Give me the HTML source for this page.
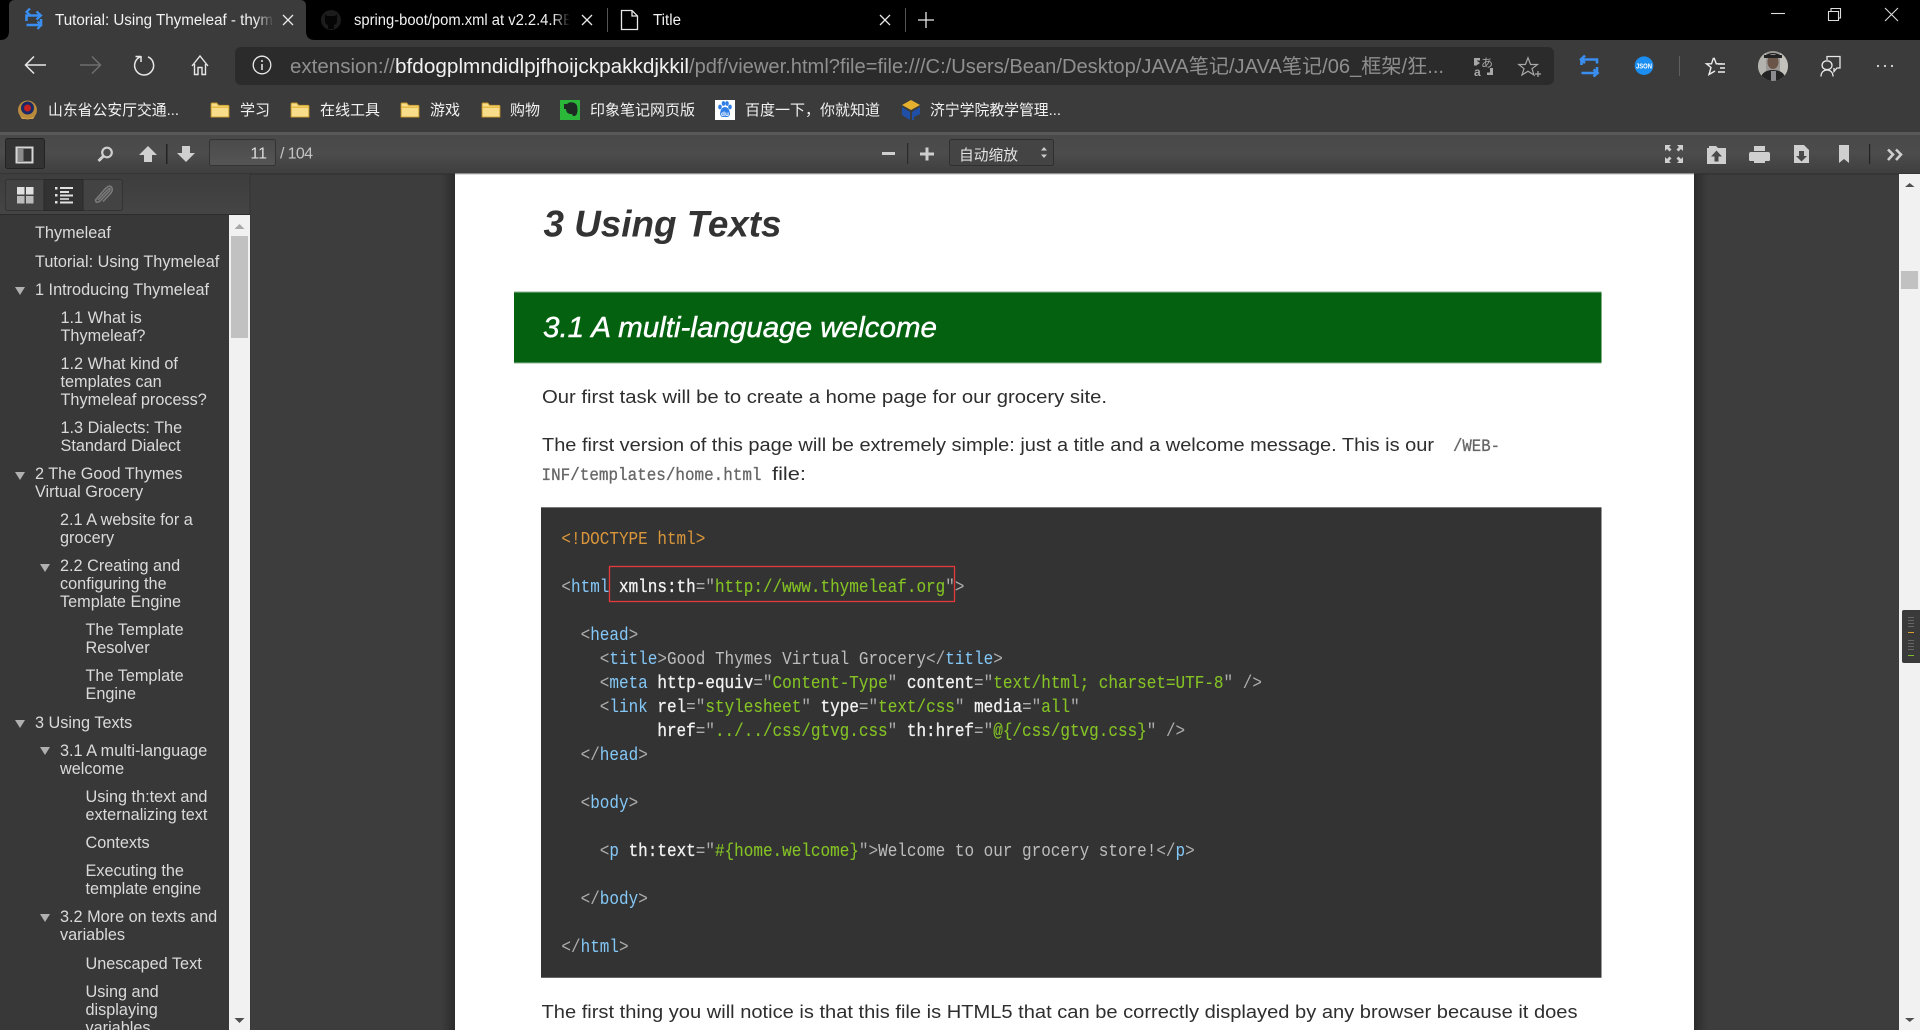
<!DOCTYPE html>
<html>
<head>
<meta charset="utf-8">
<title>Tutorial: Using Thymeleaf</title>
<style>
html,body{margin:0;padding:0;background:#3b3b3b;overflow:hidden}
svg{display:block}
text{font-family:"Liberation Sans","Noto Sans CJK SC",sans-serif}
.cjk{font-family:"Liberation Sans","Noto Sans CJK SC",sans-serif;font-size:15px;fill:#f2f2f2}
.s{font-size:16.25px;fill:#dadada}
.c{font-family:"Liberation Mono",monospace;font-size:18px;white-space:pre;fill:#b5b5b5}
.o{fill:#d9963a}.b{fill:#84c8f8}.w{fill:#f2f2f2;stroke:#f2f2f2;stroke-width:.3}.g{fill:#84c225;stroke:#84c225;stroke-width:.12}.p{fill:#adadad}.t{fill:#bdbdbd}
.ic{fill:none;stroke:#e6e6e6;stroke-width:1.5}
.pd{fill:#cfcfcf}
</style>
</head>
<body>
<svg xmlns="http://www.w3.org/2000/svg" width="1920" height="1030" viewBox="0 0 1920 1030">
<defs>
<linearGradient id="tb" x1="0" y1="0" x2="0" y2="1"><stop offset="0" stop-color="#484848"/><stop offset=".5" stop-color="#4c4c4c"/><stop offset="1" stop-color="#3e3e3e"/></linearGradient>
<linearGradient id="st" x1="0" y1="0" x2="0" y2="1"><stop offset="0" stop-color="#3d3d3d"/><stop offset="1" stop-color="#454545"/></linearGradient>
<linearGradient id="shR" x1="0" y1="0" x2="1" y2="0"><stop offset="0" stop-color="#2c2c2c"/><stop offset="1" stop-color="#3d3d3d"/></linearGradient>
<linearGradient id="shL" x1="1" y1="0" x2="0" y2="0"><stop offset="0" stop-color="#2c2c2c"/><stop offset="1" stop-color="#3d3d3d"/></linearGradient>
<linearGradient id="f1" x1="0" y1="0" x2="1" y2="0"><stop offset="0" stop-color="#3b3b3b" stop-opacity="0"/><stop offset="1" stop-color="#3b3b3b"/></linearGradient>
<linearGradient id="f2" x1="0" y1="0" x2="1" y2="0"><stop offset="0" stop-color="#000" stop-opacity="0"/><stop offset=".8" stop-color="#000"/></linearGradient>
<linearGradient id="inp" x1="0" y1="0" x2="0" y2="1"><stop offset="0" stop-color="#4a4a4a"/><stop offset="1" stop-color="#555"/></linearGradient>
<clipPath id="av"><circle cx="1773" cy="66" r="15"/></clipPath>
<symbol id="fold" viewBox="0 0 20 16"><path d="M.5 15.500V1.500q0-1 1-1h5l2 2.500h10q1 0 1 1v11.500z" fill="#f8dd8a" stroke="#c79a2a"/><path d="M.5 5h19" stroke="#e5b93f" stroke-width="1.500"/></symbol>
</defs>

<!-- Tab strip -->
<rect x="0" y="0" width="1920" height="40" fill="#000"/>
<rect x="0" y="40" width="1920" height="92" fill="#3b3b3b"/>
<path d="M0 40Q9 40 9 31V6Q9 0 15 0H300Q306 0 306 6V31Q306 40 315 40Z" fill="#3b3b3b"/>
<g fill="none" stroke="#3a8eef" stroke-width="2.600">
<path d="M26.500 21V15.500H41"/><path d="M30 8.500L26.500 12 30 15" stroke-width="2.200"/>
<path d="M41 19V25H26.500"/><path d="M37.500 21.500L41 25 37.500 29" stroke-width="2.200"/>
<path d="M36.500 11.500L41 15.500 36.500 19.500" stroke-width="2.200"/>
</g>
<text x="55" y="25" font-size="15.300" fill="#f2f2f2" textLength="218" lengthAdjust="spacingAndGlyphs">Tutorial: Using Thymeleaf - thym</text>
<rect x="255" y="8" width="19" height="24" fill="url(#f1)"/>
<path d="M283 15L293 25M293 15L283 25" stroke="#e8e8e8" stroke-width="1.300"/>
<circle cx="331" cy="20" r="10" fill="#1c1c1c"/><path d="M325 14l2 2h8l2-2v7q0 3-3 4v4h-6v-4q-3-1-3-4z" fill="#050505"/>
<text x="354" y="25" font-size="15.300" fill="#f2f2f2" textLength="219" lengthAdjust="spacingAndGlyphs">spring-boot/pom.xml at v2.2.4.RE</text>
<rect x="553" y="8" width="21" height="24" fill="url(#f2)"/>
<path d="M582 15L592 25M582 25L592 15" stroke="#e8e8e8" stroke-width="1.300"/>
<rect x="607" y="8" width="1" height="24" fill="#555"/>
<path d="M621.500 10.500H632L637.500 16V29.500H621.500ZM632 10.500V16H637.500" fill="none" stroke="#e8e8e8" stroke-width="1.300"/>
<text x="653" y="25" font-size="15.300" fill="#f2f2f2" textLength="28" lengthAdjust="spacingAndGlyphs">Title</text>
<path d="M880 15L890 25M880 25L890 15" stroke="#e8e8e8" stroke-width="1.300"/>
<rect x="905" y="8" width="1" height="24" fill="#555"/>
<path d="M926 12V28M918 20H934" stroke="#e8e8e8" stroke-width="1.300"/>
<!-- window controls -->
<path d="M1771 13.500H1785" stroke="#ddd" stroke-width="1.100"/>
<path d="M1828.500 11.500H1838.500V20.500H1828.500ZM1831 11V8.500H1840.500V18H1838.500" fill="none" stroke="#ddd" stroke-width="1.100"/>
<path d="M1885 8L1898 21M1898 8L1885 21" stroke="#ddd" stroke-width="1.100"/>

<!-- Nav -->
<path d="M46 65H26M34 56.500L25.500 65 34 73.500" fill="none" stroke="#e8e8e8" stroke-width="1.500"/>
<path d="M80 65H100M92 56.500L100.500 65 92 73.500" fill="none" stroke="#6e6e6e" stroke-width="1.500"/>
<path d="M141 56.500A9.500 9.500 0 1 0 148 56.800M141 56V62M141 56.500H135.500" fill="none" stroke="#e8e8e8" stroke-width="1.500"/>
<path d="M192 66L200 56 208 66M194.500 64V74.500H198V67.500H202V74.500H205.500V64" fill="none" stroke="#e8e8e8" stroke-width="1.400"/>
<rect x="235" y="47" width="1319" height="38" rx="6" fill="#2b2b2b"/>
<circle cx="262" cy="65" r="8.800" fill="none" stroke="#e8e8e8" stroke-width="1.300"/><path d="M262 64V70M262 60V62" stroke="#e8e8e8" stroke-width="1.500"/>
<text x="290" y="73" font-size="20" fill="#8f8f8f" textLength="105" lengthAdjust="spacingAndGlyphs">extension://</text>
<text x="395" y="73" font-size="20" fill="#f2f2f2" textLength="294" lengthAdjust="spacingAndGlyphs">bfdogplmndidlpjfhoijckpakkdjkkil</text>
<text x="689" y="73" font-size="20" fill="#8f8f8f" textLength="755" lengthAdjust="spacingAndGlyphs">/pdf/viewer.html?file=file:///C:/Users/Bean/Desktop/JAVA笔记/JAVA笔记/06_框架/狂...</text>
<!-- translate -->
<g fill="#a8a8a8"><path d="M1474 58h6v2.500h-3v5h-3zM1480 63l-3-2v4z"/><path d="M1487 75h6v-7h-3v4.500h-3z"/>
<text x="1474" y="76" font-size="12" font-weight="bold">a</text><text x="1481" y="67" font-size="12">あ</text></g>
<path d="M1528 57.800L1530.600 64.500H1537.500L1532 68.700 1534 75 1528 71.200 1522 75 1524 68.700 1518.800 64.500H1525.400Z" fill="none" stroke="#a8a8a8" stroke-width="1.200"/>
<path d="M1535 74h6M1538 71v6" stroke="#a8a8a8" stroke-width="1.200"/>
<!-- right icons -->
<g fill="none" stroke="#3a8eef" stroke-width="2.600">
<path d="M1581.500 65V59.500H1597V63.500M1597 67V73H1581.500"/><path d="M1585 55.500L1581 59.500 1585 63"/><path d="M1593.500 69.500L1597.500 73 1593.500 76.500"/>
</g>
<circle cx="1644" cy="65.700" r="9.300" fill="#1b8ef2"/><text x="1644" y="68.500" font-size="7.500" fill="#fff" text-anchor="middle" font-weight="bold" textLength="16" lengthAdjust="spacingAndGlyphs">JSON</text>
<rect x="1679" y="56" width="1" height="20" fill="#5f5f5f"/>
<path d="M1714 57.800L1716.300 63.800H1722M1720 68H1725M1718 72H1725M1718 64H1725M1713.500 57.800L1711.500 63.800H1706.500L1711 67.500 1709 74.500 1715 71" fill="none" stroke="#eee" stroke-width="1.400"/>
<g clip-path="url(#av)"><rect x="1758" y="51" width="30" height="30" fill="#9a9895"/><rect x="1758" y="51" width="8" height="30" fill="#b5b3ae"/><rect x="1780" y="51" width="8" height="30" fill="#c2c1bc"/><ellipse cx="1773" cy="62" rx="5.500" ry="7" fill="#6b5448"/><path d="M1766 58q7-8 14 0v-3q-7-4-14 0z" fill="#1c1c1c"/><rect x="1764" y="55" width="18" height="3" fill="#222"/><path d="M1760 81q1-11 13-11t13 11z" fill="#242424"/><rect x="1771" y="71" width="5" height="10" fill="#8a8a8f"/></g>
<path d="M1827 60V56.500H1840V68H1837L1834 71.500V68M1821 76.500C1821 72 1824 70 1827 70 1830 70 1833 72 1833 76.500M1827 61A4.300 4.300 0 1 0 1827.100 69.500 4.300 4.300 0 1 0 1827 61Z" fill="none" stroke="#e8e8e8" stroke-width="1.300"/>
<circle cx="1878" cy="66" r="1.100" fill="#ddd"/><circle cx="1885" cy="66" r="1.100" fill="#ddd"/><circle cx="1892" cy="66" r="1.100" fill="#ddd"/>

<!-- Bookmarks -->
<circle cx="27.500" cy="110" r="9.500" fill="#b98a3c"/><circle cx="27.500" cy="108" r="6.500" fill="#1b2a66"/><circle cx="27.500" cy="108" r="3.500" fill="#c82020"/><path d="M20 116q7.500 5 15 0l-2 3h-11z" fill="#d4a24c"/>
<text class="cjk" x="48" y="115" textLength="131" lengthAdjust="spacingAndGlyphs">山东省公安厅交通...</text>
<use href="#fold" x="210" y="102.500" width="20" height="15"/>
<text class="cjk" x="240" y="115">学习</text>
<use href="#fold" x="290" y="102.500" width="20" height="15"/>
<text class="cjk" x="320" y="115">在线工具</text>
<use href="#fold" x="400" y="102.500" width="20" height="15"/>
<text class="cjk" x="430" y="115">游戏</text>
<use href="#fold" x="481" y="102.500" width="20" height="15"/>
<text class="cjk" x="510" y="115">购物</text>
<rect x="560" y="100" width="20" height="20" fill="#2bb83a"/><path d="M564 104h3l2-1.500q6-1 8 3 1 5 0 8-1 3-4 2.500l-1-2h-2q-4-1-4-5h-2z" fill="#1f2a24"/>
<text class="cjk" x="590" y="115">印象笔记网页版</text>
<rect x="715" y="100" width="20" height="20" fill="#fff"/><g fill="#2f7fe6"><ellipse cx="720" cy="107" rx="1.800" ry="2.400"/><ellipse cx="730" cy="107" rx="1.800" ry="2.400"/><ellipse cx="723.500" cy="103.500" rx="1.800" ry="2.400"/><ellipse cx="727" cy="103.500" rx="1.800" ry="2.400"/><path d="M725 107q3 0 4.500 4 1.500 5-2 6h-5q-3.500-1-2-6 1.500-4 4.500-4z"/></g><text x="725" y="116" font-size="6.500" fill="#fff" text-anchor="middle" font-weight="bold">du</text>
<text class="cjk" x="745" y="115">百度一下，你就知道</text>
<path d="M911 100L920 105 911 110 902 105Z" fill="#e5b02e"/><path d="M902 107L910 112V120L902 115ZM912 112L920 107V114L914 117V120H912Z" fill="#1f4fa6"/>
<text class="cjk" x="930" y="115" textLength="131" lengthAdjust="spacingAndGlyphs">济宁学院教学管理...</text>

<!-- PDF toolbar -->
<rect x="0" y="132" width="1920" height="42" fill="url(#tb)"/>
<rect x="0" y="132" width="1920" height="3" fill="#585858"/>
<rect x="5.500" y="138.500" width="39" height="30" rx="2" fill="#333" stroke="#232323"/>
<rect x="16.500" y="147.500" width="16" height="15" fill="none" stroke="#d6d6d6" stroke-width="2"/><rect x="17.500" y="148" width="6" height="14" fill="#8a8a8a"/>
<circle cx="107" cy="152.500" r="4.800" fill="none" stroke="#cfcfcf" stroke-width="2.200"/><path d="M103.500 156L98.500 161" stroke="#cfcfcf" stroke-width="3"/>
<path class="pd" d="M148 146L157 155H152V162H144V155H139Z"/>
<rect x="166" y="144" width="1.500" height="20" fill="#222"/>
<path class="pd" d="M186 162L177 153H182V146H190V153H195Z"/>
<rect x="209.500" y="139.500" width="66" height="26" rx="2" fill="url(#inp)" stroke="#333"/>
<text x="267" y="158.500" font-size="16" fill="#dcdcdc" text-anchor="end">11</text>
<text x="280" y="158.500" font-size="16" fill="#c4c4c4" textLength="33">/ 104</text>
<rect x="882" y="152" width="13" height="3" fill="#cfcfcf"/>
<rect x="907" y="143" width="1.200" height="21" fill="#2a2a2a"/>
<path class="pd" d="M925.500 147.500h3v5h5.500v3h-5.500v5h-3v-5H920v-3h5.500z"/>
<rect x="949.500" y="139.500" width="104" height="26" rx="2" fill="#444" stroke="#2f2f2f"/>
<text x="959" y="160" font-size="15" fill="#e2e2e2" textLength="59" lengthAdjust="spacingAndGlyphs">自动缩放</text>
<path d="M1041 150.500L1044 147 1047 150.500ZM1041 154.500L1044 158 1047 154.500Z" fill="#ccc"/>
<!-- right toolbar icons -->
<g class="pd">
<path d="M1665 145h6l-2 2 2.500 2.500-2 2-2.500-2.500-2 2zM1683 145h-6l2 2-2.500 2.500 2 2 2.500-2.500 2 2zM1665 163h6l-2-2 2.500-2.500-2-2-2.500 2.500-2-2zM1683 163h-6l2-2-2.500-2.500 2-2 2.500 2.500 2-2z"/>
<path fill-rule="evenodd" d="M1707 148h2v-2h7l2 2h8v16h-19zM1716.500 150.500l-5.500 6h3.500v5h4v-5h3.500z"/>
<path d="M1754 146h11v5h-11z"/><path d="M1751 152q-2 0-2 2v6q0 1 2 1h3v2h11v-2h3q2 0 2-1v-6q0-2-2-2z"/>
<path fill-rule="evenodd" d="M1794 145h10l5 5v13h-15zM1799 151v5h-3l5.500 5.500 5.500-5.500h-3v-5z"/>
<path d="M1839 145h10v18l-5-4-5 4z"/>
</g>
<rect x="1869" y="144" width="1.200" height="20" fill="#222"/>
<path d="M1888 149.500L1893 154.500 1888 160M1896 149.500L1901 154.500 1896 160" fill="none" stroke="#cfcfcf" stroke-width="2.600"/>

<!-- Viewer background -->
<rect x="250" y="174" width="1650" height="856" fill="#3d3d3d"/>
<rect x="441" y="174" width="14" height="856" fill="url(#shL)"/>
<rect x="1694" y="174" width="14" height="856" fill="url(#shR)"/>
<rect x="455" y="174" width="1239" height="856" fill="#fff"/>
<rect x="0" y="173.500" width="1920" height="1" fill="#2d2d2d"/>
<rect x="455" y="173.500" width="1239" height="1.500" fill="#dddddd"/>

<!-- Sidebar -->
<rect x="0" y="174" width="250" height="41" fill="url(#st)"/>
<rect x="0" y="214" width="250" height="1" fill="#2c2c2c"/>
<rect x="249.500" y="174" width="1" height="856" fill="#333"/>
<rect x="0" y="215" width="229" height="815" fill="#383838"/>
<rect x="229" y="215" width="21" height="815" fill="#f1f1f1"/>
<rect x="231" y="236" width="17" height="102" fill="#c1c1c1"/>
<path d="M234.500 229L239.500 224 244.500 229Z" fill="#a8a8a8"/>
<path d="M234.500 1018L244.500 1018 239.500 1023Z" fill="#505050"/>
<rect x="5.500" y="179.500" width="117" height="31" rx="2" fill="#434343" stroke="#333"/>
<rect x="44" y="179.500" width="39" height="31" fill="#323232" stroke="#2a2a2a"/>
<g fill="#e0e0e0"><rect x="17" y="187" width="7.500" height="7.500"/><rect x="26" y="187" width="7.500" height="7.500"/><rect x="17" y="196" width="7.500" height="7.500" fill="#bbb"/><rect x="26" y="196" width="7.500" height="7.500" fill="#bbb"/>
<rect x="55" y="187" width="2.500" height="2.500"/><rect x="60" y="187" width="13" height="2"/><rect x="60" y="191" width="9" height="2"/><rect x="55" y="194" width="2.500" height="2.500"/><rect x="60" y="194.500" width="13" height="2"/><rect x="60" y="198" width="9" height="2" fill="#bbb"/><rect x="55" y="201" width="2.500" height="2.500"/><rect x="60" y="201.500" width="13" height="2"/></g>
<path d="M98 200L108 189.500Q111 187 109.500 191L100 201Q96 204 95.500 200L105 189Q110 184 112 188 113 191 110 194L103 201.500" fill="none" stroke="#7a7a7a" stroke-width="1.600"/>
<g fill="#b0b0b0">
<path d="M15 287H25L20 295Z"/><path d="M15 472H25L20 480Z"/><path d="M15 720H25L20 728Z"/>
<path d="M40 564H50L45 572Z"/><path d="M40 747H50L45 755Z"/><path d="M40 914H50L45 922Z"/>
</g>
<text class="s" x="35" y="238">Thymeleaf</text>
<text class="s" x="35" y="267">Tutorial: Using Thymeleaf</text>
<text class="s" x="35" y="295">1 Introducing Thymeleaf</text>
<text class="s" x="60.500" y="323">1.1 What is</text>
<text class="s" x="60.500" y="341">Thymeleaf?</text>
<text class="s" x="60.500" y="369">1.2 What kind of</text>
<text class="s" x="60.500" y="387">templates can</text>
<text class="s" x="60.500" y="405">Thymeleaf process?</text>
<text class="s" x="60.500" y="433">1.3 Dialects: The</text>
<text class="s" x="60.500" y="451">Standard Dialect</text>
<text class="s" x="35" y="479">2 The Good Thymes</text>
<text class="s" x="35" y="497">Virtual Grocery</text>
<text class="s" x="60" y="525">2.1 A website for a</text>
<text class="s" x="60" y="543">grocery</text>
<text class="s" x="60" y="571">2.2 Creating and</text>
<text class="s" x="60" y="589">configuring the</text>
<text class="s" x="60" y="607">Template Engine</text>
<text class="s" x="85.500" y="635">The Template</text>
<text class="s" x="85.500" y="653">Resolver</text>
<text class="s" x="85.500" y="681">The Template</text>
<text class="s" x="85.500" y="699">Engine</text>
<text class="s" x="35" y="728">3 Using Texts</text>
<text class="s" x="60" y="756">3.1 A multi-language</text>
<text class="s" x="60" y="774">welcome</text>
<text class="s" x="85.500" y="802">Using th:text and</text>
<text class="s" x="85.500" y="820">externalizing text</text>
<text class="s" x="85.500" y="848">Contexts</text>
<text class="s" x="85.500" y="876">Executing the</text>
<text class="s" x="85.500" y="894">template engine</text>
<text class="s" x="60" y="922">3.2 More on texts and</text>
<text class="s" x="60" y="940">variables</text>
<text class="s" x="85.500" y="969">Unescaped Text</text>
<text class="s" x="85.500" y="997">Using and</text>
<text class="s" x="85.500" y="1015">displaying</text>
<text class="s" x="85.500" y="1033">variables</text>

<!-- PDF page -->
<text x="543.500" y="236.500" font-size="37.500" font-weight="bold" font-style="italic" fill="#333" textLength="238" lengthAdjust="spacingAndGlyphs">3 Using Texts</text>
<rect x="514" y="291.500" width="1087.500" height="72" fill="#8fb596"/>
<rect x="514" y="292.500" width="1087.500" height="70" fill="#03610f"/>
<text x="543" y="337" font-size="29" font-style="italic" fill="#fff" stroke="#fff" stroke-width=".45" textLength="394" lengthAdjust="spacingAndGlyphs">3.1 A multi-language welcome</text>
<text x="542" y="403" font-size="18.800" fill="#2e2e2e" textLength="565" lengthAdjust="spacingAndGlyphs">Our first task will be to create a home page for our grocery site.</text>
<text x="542" y="451" font-size="18.800" fill="#2e2e2e" textLength="892" lengthAdjust="spacingAndGlyphs">The first version of this page will be extremely simple: just a title and a welcome message. This is our</text>
<text x="1453" y="451" font-size="17.500" fill="#666" stroke="#666" stroke-width=".3" textLength="47" lengthAdjust="spacingAndGlyphs" style="font-family:'Liberation Mono',monospace">/WEB-</text>
<text x="541.500" y="480" font-size="17.500" fill="#666" stroke="#666" stroke-width=".3" textLength="220" lengthAdjust="spacingAndGlyphs" style="font-family:'Liberation Mono',monospace">INF/templates/home.html</text>
<text x="772" y="480" font-size="18.800" fill="#2e2e2e" textLength="34" lengthAdjust="spacingAndGlyphs">file:</text>
<rect x="541" y="507" width="1060.500" height="471" fill="#333"/>
<rect x="541" y="507" width="1060.500" height="1" fill="#777"/>
<rect x="541" y="977" width="1060.500" height="1" fill="#666"/>
<rect x="609.500" y="566.500" width="345" height="35" fill="none" stroke="#e33b3b" stroke-width="1.300"/>
<g transform="translate(561.400,0) scale(.889,1)">
<text class="c" y="544"><tspan class="o">&lt;!DOCTYPE html&gt;</tspan></text>
<text class="c" y="592"><tspan class="p">&lt;</tspan><tspan class="b">html</tspan><tspan class="w"> xmlns:th</tspan><tspan class="p">="</tspan><tspan class="g">http://www.thymeleaf.org</tspan><tspan class="p">"&gt;</tspan></text>
<text class="c" y="640">  <tspan class="p">&lt;</tspan><tspan class="b">head</tspan><tspan class="p">&gt;</tspan></text>
<text class="c" y="664">    <tspan class="p">&lt;</tspan><tspan class="b">title</tspan><tspan class="p">&gt;</tspan><tspan class="t">Good Thymes Virtual Grocery</tspan><tspan class="p">&lt;/</tspan><tspan class="b">title</tspan><tspan class="p">&gt;</tspan></text>
<text class="c" y="688">    <tspan class="p">&lt;</tspan><tspan class="b">meta</tspan><tspan class="w"> http-equiv</tspan><tspan class="p">="</tspan><tspan class="g">Content-Type</tspan><tspan class="p">"</tspan><tspan class="w"> content</tspan><tspan class="p">="</tspan><tspan class="g">text/html; charset=UTF-8</tspan><tspan class="p">" /&gt;</tspan></text>
<text class="c" y="712">    <tspan class="p">&lt;</tspan><tspan class="b">link</tspan><tspan class="w"> rel</tspan><tspan class="p">="</tspan><tspan class="g">stylesheet</tspan><tspan class="p">"</tspan><tspan class="w"> type</tspan><tspan class="p">="</tspan><tspan class="g">text/css</tspan><tspan class="p">"</tspan><tspan class="w"> media</tspan><tspan class="p">="</tspan><tspan class="g">all</tspan><tspan class="p">"</tspan></text>
<text class="c" y="736">          <tspan class="w">href</tspan><tspan class="p">="</tspan><tspan class="g">../../css/gtvg.css</tspan><tspan class="p">"</tspan><tspan class="w"> th:href</tspan><tspan class="p">="</tspan><tspan class="g">@{/css/gtvg.css}</tspan><tspan class="p">" /&gt;</tspan></text>
<text class="c" y="760">  <tspan class="p">&lt;/</tspan><tspan class="b">head</tspan><tspan class="p">&gt;</tspan></text>
<text class="c" y="808">  <tspan class="p">&lt;</tspan><tspan class="b">body</tspan><tspan class="p">&gt;</tspan></text>
<text class="c" y="856">    <tspan class="p">&lt;</tspan><tspan class="b">p</tspan><tspan class="w"> th:text</tspan><tspan class="p">="</tspan><tspan class="g">#{home.welcome}</tspan><tspan class="p">"&gt;</tspan><tspan class="t">Welcome to our grocery store!</tspan><tspan class="p">&lt;/</tspan><tspan class="b">p</tspan><tspan class="p">&gt;</tspan></text>
<text class="c" y="904">  <tspan class="p">&lt;/</tspan><tspan class="b">body</tspan><tspan class="p">&gt;</tspan></text>
<text class="c" y="952"><tspan class="p">&lt;/</tspan><tspan class="b">html</tspan><tspan class="p">&gt;</tspan></text>
</g>
<text x="541.500" y="1018" font-size="18.800" fill="#2e2e2e" textLength="1036" lengthAdjust="spacingAndGlyphs">The first thing you will notice is that this file is HTML5 that can be correctly displayed by any browser because it does</text>

<!-- Main scrollbar -->
<rect x="1899" y="174" width="21" height="856" fill="#f1f1f1"/>
<path d="M1905 187L1914.500 187 1909.700 183Z" fill="#505050"/>
<rect x="1901" y="271" width="17" height="18" fill="#c1c1c1"/>
<path d="M1905 1018H1914.500L1909.700 1022Z" fill="#505050"/>
<path d="M1920 610H1904Q1902 610 1902 612V661Q1902 663 1904 663H1920Z" fill="#3a3a3a"/>
<g fill="#666"><rect x="1908" y="617" width="6" height="1"/><rect x="1908" y="620" width="6" height="1"/><rect x="1908" y="623" width="6" height="1"/><rect x="1908" y="626" width="6" height="1"/><rect x="1908" y="640" width="6" height="1"/><rect x="1908" y="643" width="6" height="1"/><rect x="1908" y="646" width="6" height="1"/><rect x="1908" y="649" width="6" height="1"/></g>
<rect x="1908" y="632" width="6" height="1" fill="#d7a12c"/><rect x="1908" y="655" width="6" height="1" fill="#7dbb2c"/>
</svg>
</body>
</html>
